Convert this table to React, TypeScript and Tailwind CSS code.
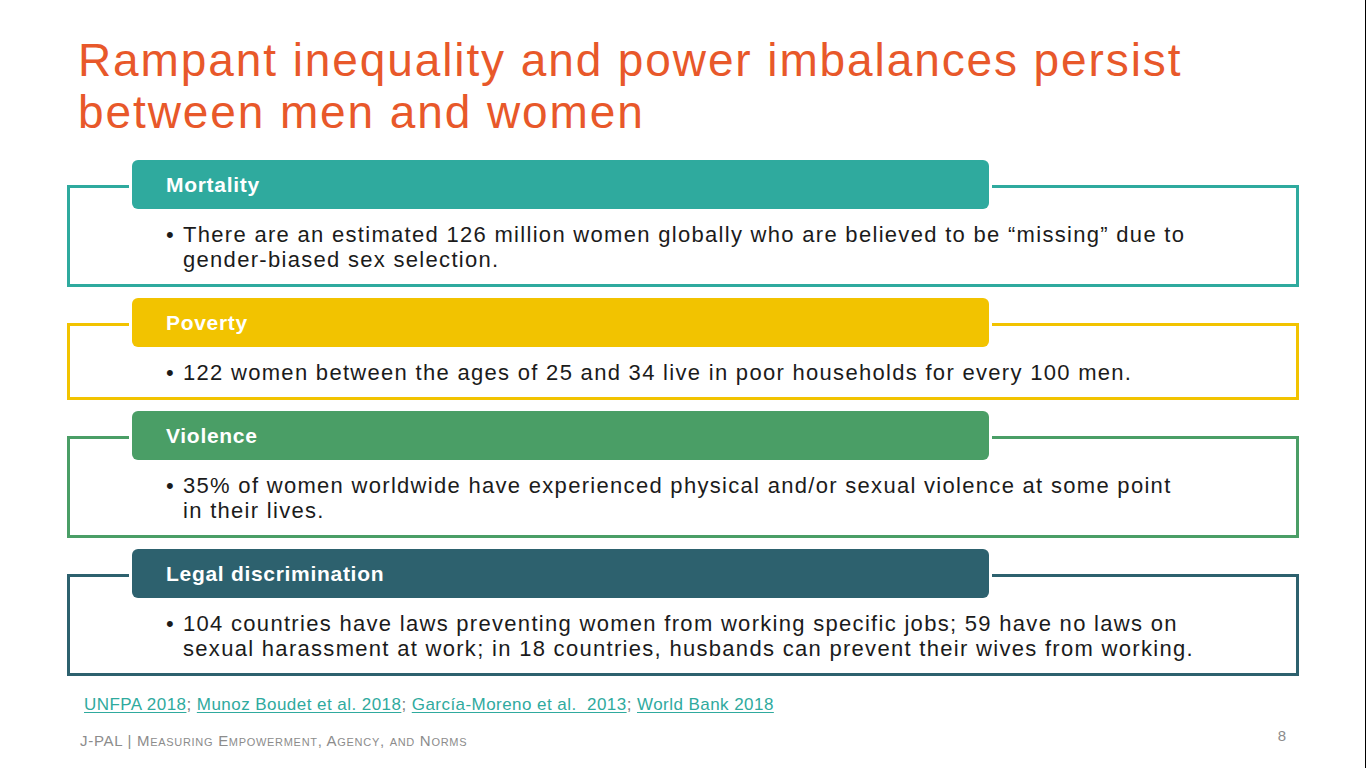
import React from 'react';

type Card = {
  title: string;
  lines: string[];
  color: string;
};

const cards: Card[] = [
  {
    title: 'Mortality',
    lines: [
      'There are an estimated 126 million women globally who are believed to be \u201cmissing\u201d due to',
      'gender-biased sex selection.',
    ],
    color: 'teal',
  },
  {
    title: 'Poverty',
    lines: ['122 women between the ages of 25 and 34 live in poor households for every 100 men.'],
    color: 'yellow',
  },
  {
    title: 'Violence',
    lines: [
      '35% of women worldwide have experienced physical and/or sexual violence at some point',
      'in their lives.',
    ],
    color: 'green',
  },
  {
    title: 'Legal discrimination',
    lines: [
      '104 countries have laws preventing women from working specific jobs; 59 have no laws on',
      'sexual harassment at work; in 18 countries, husbands can prevent their wives from working.',
    ],
    color: 'slate',
  },
];

const tabStyles: Record<string, string> = {
  teal: 'bg-[#2faa9e]',
  yellow: 'bg-[#f2c300]',
  green: 'bg-[#4a9e66]',
  slate: 'bg-[#2d616e]',
};

const boxStyles: Record<string, string> = {
  teal: 'border-[#2faa9e]',
  yellow: 'border-[#f2c300]',
  green: 'border-[#4a9e66]',
  slate: 'border-[#2d616e]',
};

const citations = ['UNFPA 2018', 'Munoz Boudet et al. 2018', 'Garc\u00eda-Moreno et al.\u00a0 2013', 'World Bank 2018'];

const InfoCard = ({ card }: { card: Card }) => (
  <div>
    <div
      className={`relative z-10 ml-[65px] flex h-[49px] w-[857px] items-center rounded-[6px] pl-[34px] ring-[3px] ring-white ${tabStyles[card.color]}`}
    >
      <span className="text-[21px] font-bold tracking-[0.7px] text-white">{card.title}</span>
    </div>
    <div className={`-mt-[24px] border-[3px] pb-[12px] pl-[96px] pt-[34px] ${boxStyles[card.color]}`}>
      <div className="flex text-[22px] leading-[25px] tracking-[1.3px] text-[#1b1b1b]">
        <span className="w-[17px] shrink-0 tracking-normal">{'\u2022'}</span>
        <div>
          {card.lines.map((line, i) => (
            <div key={i} className="whitespace-nowrap">
              {line}
            </div>
          ))}
        </div>
      </div>
    </div>
  </div>
);

export default function App() {
  return (
    <div className="flex h-[768px] w-[1366px] flex-col overflow-hidden border-r border-black bg-white font-['Liberation_Sans',sans-serif]">
      <h1 className="pl-[78px] pt-[34px] text-[46px] font-normal leading-[52px] tracking-[1.9px] text-[#e8582a]">
        Rampant inequality and power imbalances persist
        <br />
        between men and women
      </h1>

      <div className="ml-[67px] mt-[22px] flex w-[1232px] flex-col gap-[11px]">
        {cards.map((card) => (
          <InfoCard key={card.title} card={card} />
        ))}
      </div>

      <div className="mt-[19px] pl-[84px] text-[17px] leading-[20px] tracking-[0.45px] text-[#7f7f7f]">
        {citations.map((c, i) => (
          <React.Fragment key={c}>
            <span className="text-[#2faa9e] underline underline-offset-2">{c}</span>
            {i < citations.length - 1 && '; '}
          </React.Fragment>
        ))}
      </div>

      <div className="mt-[15px] flex items-center justify-between pl-[80px] pr-[79px]">
        <div className="text-[15px] tracking-[0.7px] text-[#8c8c8c] [font-variant:small-caps]">
          J-PAL | Measuring Empowerment, Agency, and Norms
        </div>
        <div className="-mt-[10px] text-[15px] text-[#8c8c8c]">8</div>
      </div>
    </div>
  );
}
